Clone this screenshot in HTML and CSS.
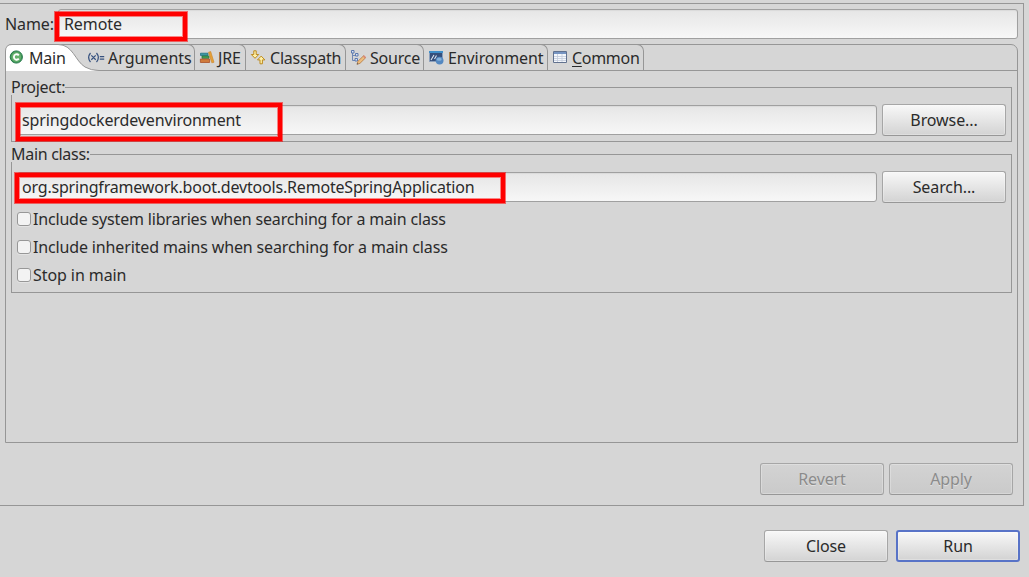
FILE: index.html
```html
<!DOCTYPE html>
<html lang="en">
<head>
<meta charset="utf-8">
<title>Run Configurations</title>
<link rel="stylesheet" href="styles.css">
</head>
<body>
<main class="dialog">
  <section class="panel">
    <div class="name-row">
      <span class="name-label">Name:</span>
      <div class="field name-field">Remote<i class="mark mark-name"></i></div>
    </div>
    <div class="folder">
      <nav class="tabs">
        <div class="tab tab-main">
          <svg class="tab-shape" width="94" height="27" viewBox="0 0 94 27"><path d="M0 27V7Q0 .5 7 .5H53C68 .5 70 17 80 23Q86 26.5 94 26.5V27Z" fill="#fff"/><path d="M.5 27V7Q.5 .5 7 .5H53C68 .5 70 17 80 23Q86 26.5 94 26.5" fill="none" stroke="#969696"/></svg>
          <svg class="icon" width="16" height="16" viewBox="0 0 16 16"><circle cx="7.3" cy="7" r="6.1" fill="#42985a" stroke="#26794a"/><circle cx="7.3" cy="7" r="4.8" fill="#65b16c"/><path d="M9.800 5.300C8.300 3.500 4.900 4.100 4.900 7s3.400 3.500 4.900 1.700" fill="none" stroke="#fff" stroke-width="1.8"/></svg>
          <span>Main</span>
        </div>
        <div class="tab tab-arguments">
          <svg class="icon" width="18" height="16" viewBox="0 0 18 16"><g fill="none" stroke="#36517f" stroke-width="1.25"><path d="M3.500 3Q-.2 7.500 3.500 12M9.500 3Q13.200 7.500 9.500 12M4.300 5.400L8.700 9.700M8.700 5.400L4.300 9.700M12.800 6.500h4.400M12.800 9h4.400"/></g></svg>
          <span>Arguments</span>
        </div>
        <div class="tab tab-jre">
          <svg class="icon" width="16" height="16" viewBox="0 0 16 16"><path d="M1.500 3.200h7.500v2.300H1.500Z" fill="#3b98a0" stroke="#237188" stroke-width=".8"/><path d="M3 6h7v2.300H3Z" fill="#47a252" stroke="#287344" stroke-width=".8"/><path d="M1.400 9h9.200v3.500H1.400Z" fill="#d07b3c" stroke="#a95228" stroke-width=".8"/><path d="M9.500 2.200l2.200-.7L15 12.300l-2.200.5Z" fill="#e5a137" stroke="#c98228" stroke-width=".6"/></svg>
          <span>JRE</span>
        </div>
        <div class="tab tab-classpath">
          <svg class="icon" width="16" height="16" viewBox="0 0 16 16"><g fill="#fff1a8" stroke="#bd8b1f"><path d="M3.800 .8h2.400v3.700H8.700L5 8.300 1.300 4.500h2.500Z"/><path d="M10 13.800h2.400V9.900H14.900L11.200 6.100 7.500 9.900h2.500Z"/></g></svg>
          <span>Classpath</span>
        </div>
        <div class="tab tab-source">
          <svg class="icon" width="16" height="16" viewBox="0 0 16 16"><path d="M1.500 3v7.500h3M1.500 5.500h3" fill="none" stroke="#6f88b5"/><g fill="#d9e5f6" stroke="#5c79ae"><path d="M.5.500h2.500v2.500H.5ZM4.500 3.500h2.500v2.500H4.500ZM4 8.500h2.500v2.500H4Z"/></g><path d="M6 14.300l.9-3 5.800-5.600 2 2-5.700 5.600Z" fill="#edbd7f" stroke="#b4793f" stroke-width=".8"/><path d="M11.900 6.500l1.200-1.200 2 2-1.200 1.200Z" fill="#d98977"/><path d="M5.800 14.500l.5-1.700 1.200 1.200Z" fill="#59616a"/></svg>
          <span>Source</span>
        </div>
        <div class="tab tab-environment">
          <svg class="icon" width="16" height="16" viewBox="0 0 16 16"><path d="M1.500 1.500h13v10h-13Z" fill="#344f7c" stroke="#8ba0bd"/><path d="M1 1h14v2H1Z" fill="#3f8fca"/><path d="M3 10l3-5M6.500 9l2-3.500" stroke="#dce6f2" stroke-width="1.100"/><circle cx="11.600" cy="10.600" r="3.900" fill="#5488c1"/><ellipse cx="11.200" cy="9.200" rx="2.500" ry="1.500" fill="#85b2da"/></svg>
          <span>Environment</span>
        </div>
        <div class="tab tab-common">
          <svg class="icon" width="16" height="16" viewBox="0 0 16 16"><path d="M.5 1.500h13v11H.5Z" fill="#f5f8fc" stroke="#62728f"/><path d="M1 2h12v2H1Z" fill="#7795c2"/><path d="M4.500 4v8M9 4v8M1 6.500h12M1 8.500h12M1 10.500h12" stroke="#c1cada" stroke-width=".8"/></svg>
          <span><u>C</u>ommon</span>
        </div>
      </nav>
      <div class="page">
        <section class="group project">
          <h2 class="legend">Project:</h2>
          <div class="field-row">
            <div class="field project-field">springdockerdevenvironment<i class="mark mark-project"></i></div>
            <button class="button">Browse...</button>
          </div>
        </section>
        <section class="group main-class">
          <h2 class="legend">Main class:</h2>
          <div class="field-row">
            <div class="field class-field">org.springframework.boot.devtools.RemoteSpringApplication<i class="mark mark-class"></i></div>
            <button class="button">Search...</button>
          </div>
          <div class="checks">
            <label class="check check-system"><input type="checkbox">Include system libraries when searching for a main class</label>
            <label class="check check-inherited"><input type="checkbox">Include inherited mains when searching for a main class</label>
            <label class="check check-stop"><input type="checkbox">Stop in main</label>
          </div>
        </section>
      </div>
    </div>
    <div class="panel-actions">
      <button class="button" disabled>Revert</button>
      <button class="button" disabled>Apply</button>
    </div>
  </section>
  <footer class="dialog-actions">
    <button class="button">Close</button>
    <button class="button primary">Run</button>
  </footer>
</main>
</body>
</html>
```
FILE: styles.css
```css
* { box-sizing: border-box; }
body {
  margin: 0;
  background: #d6d6d6;
  color: #2b2b2b;
  font: 16px/22px "Noto Sans", sans-serif;
}
.dialog {
  width: 1029px;
  height: 577px;
  padding-top: 3px;
  overflow: hidden;
}
.panel {
  width: 1024px;
  height: 503px;
  padding: 5px 5px 0;
  border: 1px solid #969696;
  border-left: 0;
}
.name-row { display: flex; height: 30px; }
.name-label { width: 53px; padding-top: 4px; letter-spacing: -.1px; }
.field {
  position: relative;
  flex: 1;
  height: 30px;
  padding: 3px 4px;
  border: 1px solid #a0a0a0;
  border-radius: 3px;
  background: linear-gradient(#e6e6e6, #f7f7f7);
  box-shadow: inset 0 1px 1px #dadada;
  white-space: nowrap;
}
.name-field { padding-left: 5px; letter-spacing: -.1px; }
.project-field { letter-spacing: -.13px; }
.class-field { letter-spacing: -.19px; }
.mark {
  position: absolute;
  border: 4px solid #f00;
  box-shadow: 0 0 0 1px rgba(255, 0, 0, .55), inset 0 0 0 1px rgba(255, 0, 0, .45);
}
.mark-name { left: -4px; top: 2px; width: 132px; height: 29px; }
.mark-project { left: -2px; top: -3px; width: 266px; height: 38px; }
.mark-class { left: -3px; top: 0; width: 490px; height: 30px; }
.folder {
  width: 1013px;
  height: 399px;
  margin-top: 5px;
  border: 1px solid #969696;
  border-radius: 7px 7px 0 0;
}
.tabs {
  display: flex;
  height: 26px;
  margin: -1px 0 0 -1px;
  box-sizing: content-box;
  border-bottom: 1px solid #969696;
}
.tab {
  position: relative;
  display: flex;
  align-items: center;
  height: 26px;
  padding-left: 4px;
  border-top: 1px solid #969696;
  border-right: 1px solid #969696;
  border-top-right-radius: 7px;
  white-space: nowrap;
}
.tab span { position: relative; padding-top: 1px; }
.icon { position: relative; flex: none; margin: 1px 3px 0 0; }
.tab-main { width: 80px; border: 0; letter-spacing: -.2px; }
.tab-main .icon { margin-right: 4px; }
.tab-main span { padding-top: 2px; }
.tab-shape { position: absolute; left: 0; top: 0; }
.tab-arguments { width: 110px; padding-left: 2px; }
.tab-jre { width: 51px; letter-spacing: -.2px; }
.tab-classpath { width: 100px; letter-spacing: -.2px; }
.tab-classpath .icon { margin-right: 4px; }
.tab-source { width: 78px; padding-left: 5px; letter-spacing: -.2px; }
.tab-environment { width: 124px; letter-spacing: -.1px; }
.tab-environment .icon { margin-right: 4px; }
.tab-common { width: 96px; padding-left: 5px; letter-spacing: -.3px; }
u { text-underline-offset: 2px; text-decoration-thickness: 1px; }
.page {
  display: flex;
  flex-direction: column;
  gap: 12px;
  padding: 16px 5px 0;
}
.group {
  border: 1px solid #969696;
  padding: 0 5px;
}
.project { height: 55px; }
.main-class { height: 139px; }
.legend {
  width: max-content;
  height: 19px;
  margin: -12px 0 9px -6px;
  background: #d6d6d6;
  font: inherit;
  line-height: 22px;
  letter-spacing: -.3px;
}
.field-row { display: flex; align-items: center; gap: 5px; height: 32px; }
.button {
  width: 124px;
  height: 32px;
  padding: 0;
  border: 1px solid #a6a6a6;
  border-bottom-color: #979797;
  border-radius: 3px;
  background: linear-gradient(#f8f8f8, #d3d3d3);
  box-shadow: inset 0 0 0 1px rgba(255, 255, 255, .25);
  color: #2b2b2b;
  font: inherit;
  letter-spacing: -.1px;
}
.button:disabled {
  background: linear-gradient(#d3d3d3, #cacaca);
  color: #8b8b8b;
  text-shadow: 0 1px #e0e0e0;
}
.checks { display: flex; flex-direction: column; margin-top: 2px; }
.check { display: flex; align-items: center; height: 28px; gap: 2px; }
.check-system { letter-spacing: -.18px; }
.check-inherited { letter-spacing: -.145px; }
.check-stop { letter-spacing: -.08px; }
.check input {
  appearance: none;
  width: 14px;
  height: 14px;
  margin: 0;
  border: 1px solid #979797;
  border-radius: 3px;
  background: #f3f3f3;
  box-shadow: 0 1px #e3e3e3;
}
.panel-actions {
  display: flex;
  justify-content: flex-end;
  gap: 5px;
  padding: 20px 5px 0 0;
}
.dialog-actions {
  display: flex;
  justify-content: flex-end;
  gap: 8px;
  padding: 24px 9px 0 0;
}
.primary { border: 2px solid #5873c7; }
```
